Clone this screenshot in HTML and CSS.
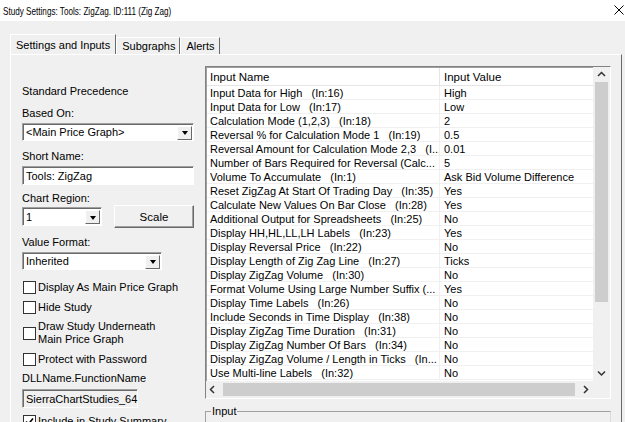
FILE: index.html
```html
<!DOCTYPE html>
<html lang="en">
<head>
  <meta charset="UTF-8" />
  <title>Study Settings</title>
  <link rel="stylesheet" href="styles.css">
</head>
<body>

  <div class="titlebar">
    <span class="title">Study Settings: Tools: ZigZag. ID:111 (Zig Zag)</span>
    <svg class="close" width="10" height="10" viewBox="0 0 10 10"><path d="M0.5 0.5 L9.5 9.5 M9.5 0.5 L0.5 9.5" stroke="#000" stroke-width="1" fill="none"/></svg>
  </div>

  <div class="tabs">
    <div class="tab active">Settings and Inputs</div>
    <div class="tab">Subgraphs</div>
    <div class="tab">Alerts</div>
  </div>

  <div class="panel">
    <div class="left">
      <div class="label first">Standard Precedence</div>

      <div class="label gap">Based On:</div>
      <div class="combo wide"><span class="combo-text">&lt;Main Price Graph&gt;</span><span class="combo-btn"><span class="arrow"></span></span></div>

      <div class="label gap">Short Name:</div>
      <div class="edit wide">Tools: ZigZag</div>

      <div class="label gap cr">Chart Region:</div>
      <div class="region-row">
        <div class="combo small"><span class="combo-text">1</span><span class="combo-btn"><span class="arrow"></span></span></div>
        <button class="btn">Scale</button>
      </div>

      <div class="label gap vf">Value Format:</div>
      <div class="combo medium"><span class="combo-text">Inherited</span><span class="combo-btn"><span class="arrow"></span></span></div>

      <div class="check cb-first"><span class="box"></span><span>Display As Main Price Graph</span></div>
      <div class="check"><span class="box"></span><span>Hide Study</span></div>
      <div class="check two-line"><span class="box"></span><span>Draw Study Underneath<br>Main Price Graph</span></div>
      <div class="check"><span class="box"></span><span>Protect with Password</span></div>

      <div class="label dll">DLLName.FunctionName</div>
      <div class="edit dll-edit">SierraChartStudies_64</div>

      <div class="check include"><span class="box"><svg width="11" height="11" viewBox="0 0 11 11"><path d="M2 5.5 L4.5 8 L9 2.5" stroke="#000" stroke-width="1.6" fill="none"/></svg></span><span>Include in Study Summary</span></div>
    </div>

    <div class="right">
      <div class="listview">
        <div class="list-body">
          <div class="list-head">
            <div class="cell name">Input Name</div>
            <div class="cell value">Input Value</div>
          </div>
          <div class="row"><div class="cell name">Input Data for High   (In:16)</div><div class="cell value">High</div></div>
          <div class="row"><div class="cell name">Input Data for Low   (In:17)</div><div class="cell value">Low</div></div>
          <div class="row"><div class="cell name">Calculation Mode (1,2,3)   (In:18)</div><div class="cell value">2</div></div>
          <div class="row"><div class="cell name">Reversal % for Calculation Mode 1   (In:19)</div><div class="cell value">0.5</div></div>
          <div class="row"><div class="cell name">Reversal Amount for Calculation Mode 2,3   (I...</div><div class="cell value">0.01</div></div>
          <div class="row"><div class="cell name">Number of Bars Required for Reversal (Calc...</div><div class="cell value">5</div></div>
          <div class="row"><div class="cell name">Volume To Accumulate   (In:1)</div><div class="cell value">Ask Bid Volume Difference</div></div>
          <div class="row"><div class="cell name">Reset ZigZag At Start Of Trading Day   (In:35)</div><div class="cell value">Yes</div></div>
          <div class="row"><div class="cell name">Calculate New Values On Bar Close   (In:28)</div><div class="cell value">Yes</div></div>
          <div class="row"><div class="cell name">Additional Output for Spreadsheets   (In:25)</div><div class="cell value">No</div></div>
          <div class="row"><div class="cell name">Display HH,HL,LL,LH Labels   (In:23)</div><div class="cell value">Yes</div></div>
          <div class="row"><div class="cell name">Display Reversal Price   (In:22)</div><div class="cell value">No</div></div>
          <div class="row"><div class="cell name">Display Length of Zig Zag Line   (In:27)</div><div class="cell value">Ticks</div></div>
          <div class="row"><div class="cell name">Display ZigZag Volume   (In:30)</div><div class="cell value">No</div></div>
          <div class="row"><div class="cell name">Format Volume Using Large Number Suffix (...</div><div class="cell value">Yes</div></div>
          <div class="row"><div class="cell name">Display Time Labels   (In:26)</div><div class="cell value">No</div></div>
          <div class="row"><div class="cell name">Include Seconds in Time Display   (In:38)</div><div class="cell value">No</div></div>
          <div class="row"><div class="cell name">Display ZigZag Time Duration   (In:31)</div><div class="cell value">No</div></div>
          <div class="row"><div class="cell name">Display ZigZag Number Of Bars   (In:34)</div><div class="cell value">No</div></div>
          <div class="row"><div class="cell name">Display ZigZag Volume / Length in Ticks   (In...</div><div class="cell value">No</div></div>
          <div class="row"><div class="cell name">Use Multi-line Labels   (In:32)</div><div class="cell value">No</div></div>
        </div>

        <div class="vscroll">
          <svg class="sb-arrow" width="17" height="15" viewBox="0 0 17 15"><path d="M5 9 L8.5 5.5 L12 9" stroke="#333" stroke-width="1.5" fill="none"/></svg>
          <div class="vtrack"><div class="vthumb"></div></div>
          <svg class="sb-arrow" width="17" height="15" viewBox="0 0 17 15"><path d="M5 5.5 L8.5 9 L12 5.5" stroke="#333" stroke-width="1.5" fill="none"/></svg>
        </div>
        <div class="hscroll">
          <svg class="sb-arrow" width="15" height="17" viewBox="0 0 15 17"><path d="M8 5 L4.5 8.5 L8 12" stroke="#333" stroke-width="1.5" fill="none"/></svg>
          <div class="htrack"><div class="hthumb"></div></div>
          <svg class="sb-arrow" width="15" height="17" viewBox="0 0 15 17"><path d="M6 5 L9.5 8.5 L6 12" stroke="#333" stroke-width="1.5" fill="none"/></svg>
        </div>
        <div class="corner"></div>
      </div>

      <fieldset class="group">
        <legend>Input</legend>
      </fieldset>
    </div>
  </div>

</body>
</html>
```

FILE: styles.css
```css
* {
  box-sizing: border-box;
}

html, body {
  height: 422px;
  overflow: hidden;
}

body {
  margin: 0;
  font-family: "Liberation Sans", Arial, sans-serif;
  font-size: 11px;
  color: #000;
  background-color: #f0f0f0;
}

/* Barra de titulo da janela */
.titlebar {
  height: 21px;
  background-color: #fff;
  display: flex;
  align-items: center;
  justify-content: space-between;
  padding: 0 1px 0 3px;
  overflow: hidden;
}

.title {
  display: inline-block;
  font-size: 11px;
  white-space: nowrap;
  transform: scaleX(0.74);
  transform-origin: left center;
  width: 170px;
}

.close {
  margin-top: -1px;
}

/* Abas */
.tabs {
  display: flex;
  align-items: flex-end;
  height: 20px;
  margin-top: 13px;
  padding-left: 10px;
}

.tab {
  height: 17px;
  line-height: 16px;
  padding: 0 4px 0 5px;
  border-top: 1px solid #fff;
  border-left: 1px solid #fff;
  border-right: 1px solid #696969;
  white-space: nowrap;
}

.tab.active {
  height: 20px;
  line-height: 20px;
  padding: 0 5px;
}

/* Painel principal */
.panel {
  display: flex;
  margin: 0 3px 0 10px;
  border-top: 1px solid #fff;
  border-left: 1px solid #fff;
  border-right: 1px solid #696969;
  height: 400px;
}

.left {
  width: 194px;
  padding: 29px 0 0 11px;
  display: flex;
  flex-direction: column;
  align-items: flex-start;
}

.label {
  line-height: 14px;
  white-space: nowrap;
}

.label.gap {
  margin-top: 8px;
  margin-bottom: 3px;
}

.label.cr {
  margin-top: 6px;
}

.label.vf {
  margin-top: 7px;
}

.label.dll {
  margin-top: 5px;
  margin-bottom: 4px;
}

/* Caixas de texto e combos */
.edit,
.combo {
  background-color: #fff;
  border: 1px solid;
  border-color: #a0a0a0 #fff #fff #a0a0a0;
  box-shadow: inset 1px 1px 0 #696969;
  display: flex;
  align-items: center;
  white-space: nowrap;
}

.edit {
  height: 19px;
  padding-left: 3px;
}

.wide {
  width: 172px;
}

.combo {
  height: 18px;
}

.combo.small {
  width: 80px;
  height: 19px;
}

.combo.medium {
  width: 140px;
}

.combo-text {
  flex: 1;
  padding-left: 3px;
}

.combo-btn {
  width: 15px;
  height: 14px;
  margin-right: 1px;
  margin-top: 1px;
  background-color: #f0f0f0;
  border: 1px solid;
  border-color: #fff #696969 #696969 #fff;
  display: flex;
  align-items: center;
  justify-content: center;
}

.arrow {
  width: 0;
  height: 0;
  border-left: 3.5px solid transparent;
  border-right: 3.5px solid transparent;
  border-top: 4px solid #000;
  margin-top: 1px;
}

.region-row {
  display: flex;
  align-items: center;
  width: 172px;
  justify-content: space-between;
  height: 23px;
  margin-top: -3px;
}

.btn {
  width: 80px;
  height: 23px;
  font-family: inherit;
  font-size: 11.5px;
  background-color: #f0f0f0;
  border: 1px solid;
  border-color: #fff #696969 #696969 #fff;
  box-shadow: inset -1px -1px 0 #a0a0a0;
  padding: 0;
}

/* Caixas de selecao */
.check {
  display: flex;
  align-items: center;
  gap: 2px;
  line-height: 14px;
  margin-top: 6px;
  white-space: nowrap;
}

.check.cb-first {
  margin-top: 10px;
}

.check.two-line {
  line-height: 13px;
  margin-top: 6px;
}

.check.include {
  margin-top: 6px;
}

.box {
  width: 13px;
  height: 13px;
  margin-left: 1px;
  background-color: #fff;
  border: 1px solid #333;
  display: flex;
  align-items: center;
  justify-content: center;
  flex-shrink: 0;
}

.dll-edit {
  width: 116px;
  background-color: #f0f0f0;
}

/* Coluna da direita: lista de inputs */
.right {
  width: 407px;
  padding-top: 11px;
}

.listview {
  width: 406px;
  height: 333px;
  border: 1px solid;
  border-color: #828282 #fff #fff #828282;
  box-shadow: inset 1px 1px 0 #a0a0a0;
  background-color: #fff;
  display: grid;
  grid-template-columns: 1fr 17px;
  grid-template-rows: 314px 17px;
}

.list-body {
  overflow: hidden;
  padding-top: 1px;
  padding-left: 1px;
}

.list-head,
.row {
  display: grid;
  grid-template-columns: 233px 1fr;
}

.list-head {
  height: 18px;
  border-bottom: 1px solid #e5e5e5;
  line-height: 18px;
  font-size: 11.5px;
}

.list-head .cell.name {
  border-right: 1px solid #e5e5e5;
}

.row {
  height: 14px;
  line-height: 14px;
  border-bottom: 1px solid #f0f0f0;
}

.row .cell.name {
  border-right: 1px solid #f0f0f0;
}

.cell {
  padding-left: 3px;
  white-space: pre;
  overflow: hidden;
}

.cell.value {
  padding-left: 4px;
}

/* Barras de rolagem */
.vscroll {
  background-color: #f0f0f0;
  display: flex;
  flex-direction: column;
}

.vtrack {
  flex: 1;
  padding: 0 2px;
}

.vthumb {
  height: 220px;
  background-color: #cdcdcd;
}

.hscroll {
  background-color: #f0f0f0;
  display: flex;
  align-items: center;
}

.htrack {
  flex: 1;
  height: 100%;
  padding: 2px 0;
}

.hthumb {
  width: 352px;
  height: 100%;
  margin-left: 2px;
  background-color: #cdcdcd;
}

.sb-arrow {
  flex-shrink: 0;
}

.corner {
  background-color: #f0f0f0;
}

/* Grupo "Input" */
.group {
  margin: 5px 0 0 0;
  padding: 0;
  width: 406px;
  height: 30px;
  border: 1px solid #dcdcdc;
  border-top-color: #a0a0a0;
  border-left-color: #a0a0a0;
}

.group legend {
  padding: 0 1px;
  margin-left: 5px;
  line-height: 14px;
}
```
